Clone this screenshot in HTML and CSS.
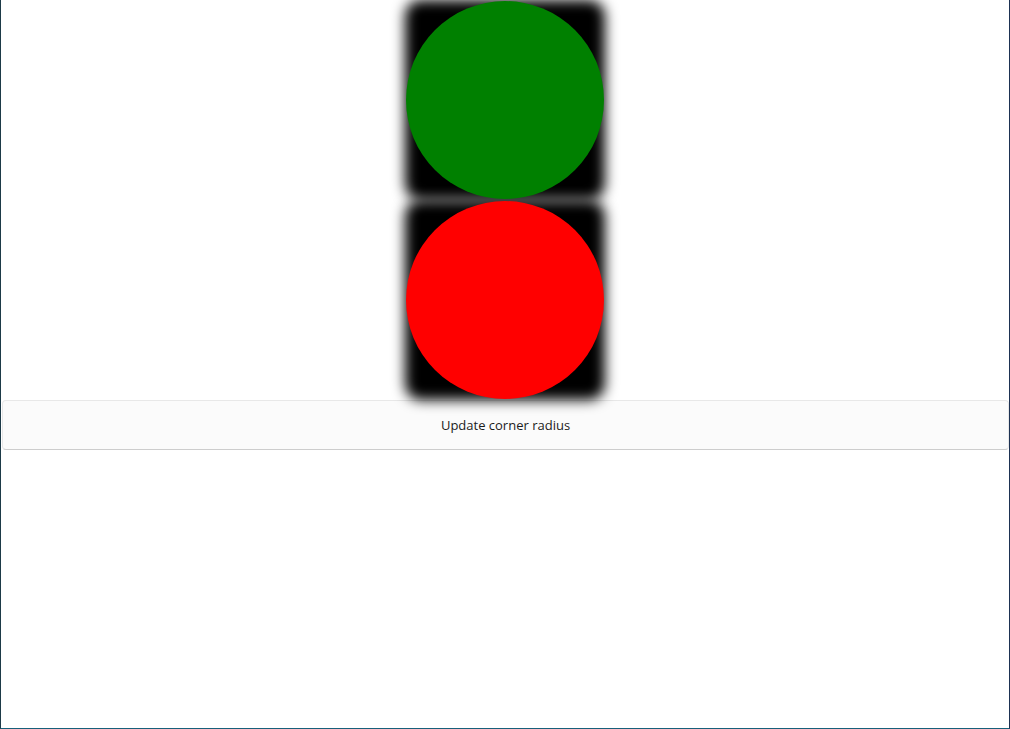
FILE: index.html
```html
<!DOCTYPE html>
<html>
<head>
<meta charset="utf-8">
<link rel="stylesheet" href="styles.css">
</head>
<body>
<div class="window">
  <div class="stack">
    <div class="tile">
      <div class="shadow"></div>
      <div class="circle green"></div>
    </div>
    <div class="tile">
      <div class="shadow"></div>
      <div class="circle red"></div>
    </div>
  </div>
  <button class="btn">Update corner radius</button>
</div>
</body>
</html>
```
FILE: styles.css
```css
html, body {
  margin: 0;
  padding: 0;
  background: #ffffff;
}
.window {
  width: 1010px;
  height: 729px;
  box-sizing: border-box;
  border-left: 1px solid #1d3a48;
  border-right: 1px solid #1d3152;
  border-bottom: 1px solid #17607a;
  display: flex;
  flex-direction: column;
  align-items: center;
  overflow: hidden;
  background: #ffffff;
}
.stack {
  display: flex;
  flex-direction: column;
}
.tile {
  width: 200px;
  height: 200px;
  display: grid;
  place-items: center;
}
.tile > * {
  grid-area: 1 / 1;
}
.shadow {
  width: 200px;
  height: 200px;
  background: #000;
  border-radius: 16px;
  filter: blur(6.5px);
}
.circle {
  width: 198px;
  height: 198px;
  border-radius: 50%;
  z-index: 1;
}
.green { background: #008000; }
.red { background: #ff0000; }
.btn {
  align-self: stretch;
  margin: 0 0 0 1px;
  height: 50px;
  box-sizing: border-box;
  background: #fbfbfb;
  border: 1px solid #e8e8e8;
  border-bottom-color: #cdcdcd;
  border-radius: 4px;
  font-family: "Open Sans", "Noto Sans", sans-serif;
  font-size: 13px;
  color: #1b1b1b;
  padding: 0;
  cursor: default;
}
```
